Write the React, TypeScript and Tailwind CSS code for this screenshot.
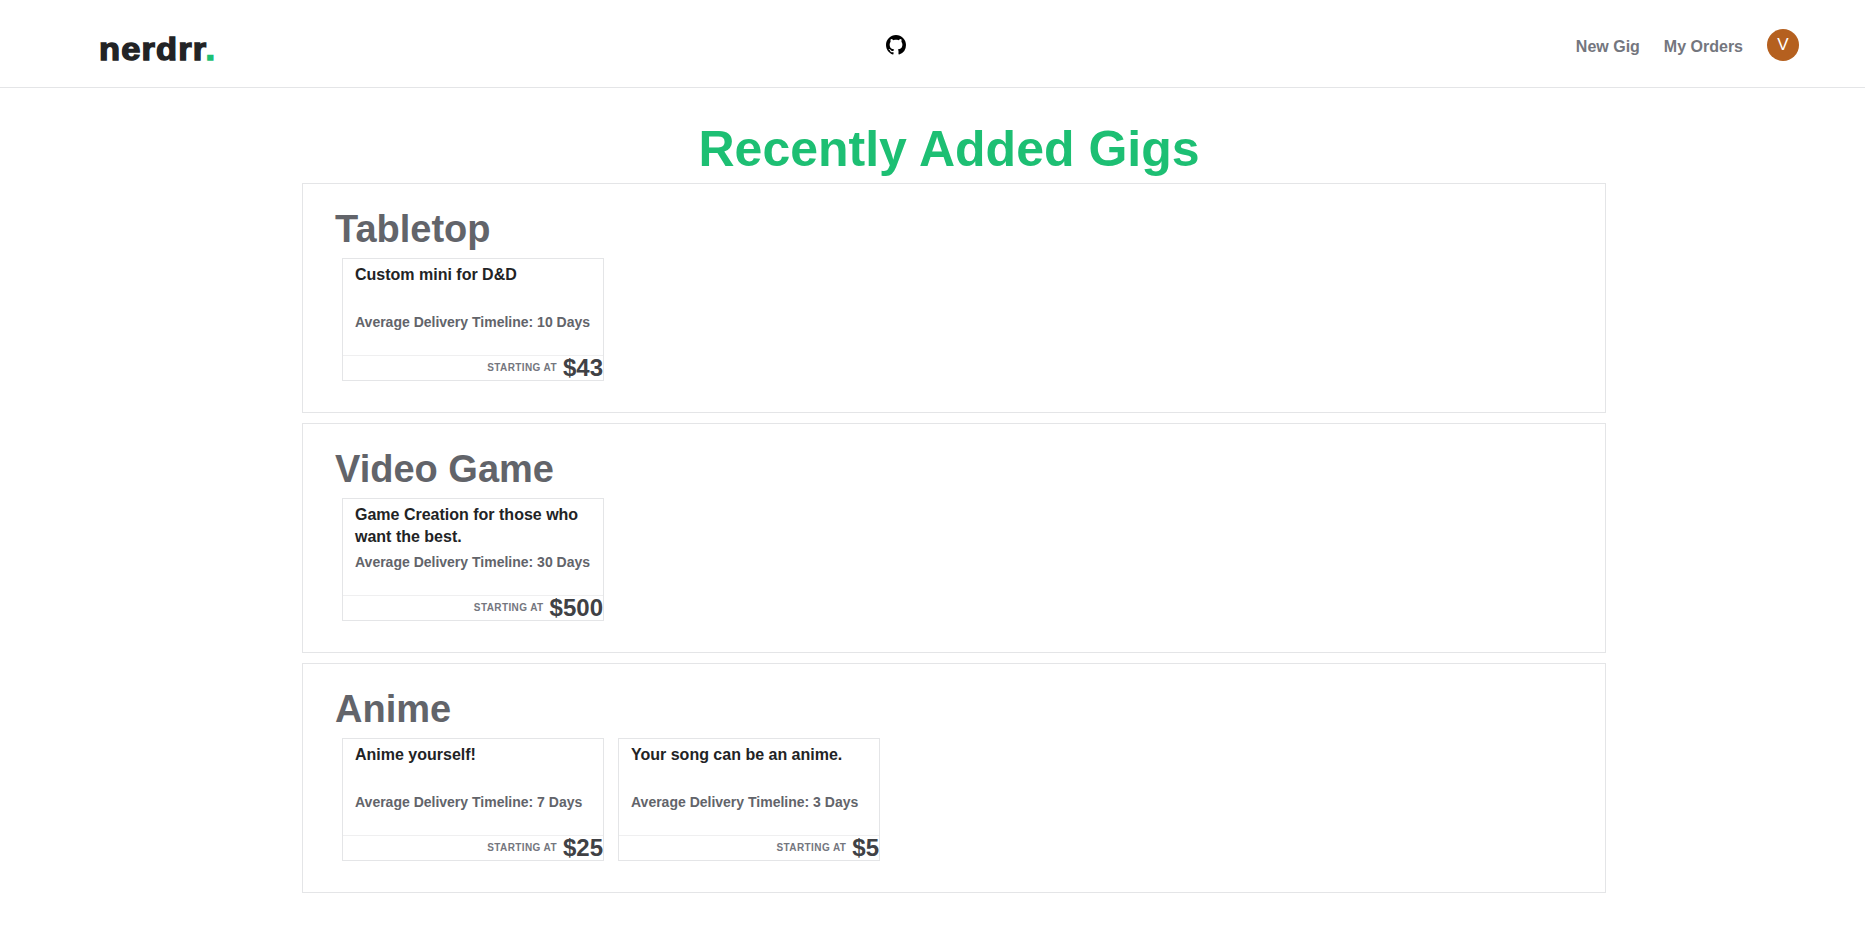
type Gig = { title: string; days: number; price: number };
type Category = { name: string; gigs: Gig[] };

const categories: Category[] = [
  { name: "Tabletop", gigs: [{ title: "Custom mini for D&D", days: 10, price: 43 }] },
  {
    name: "Video Game",
    gigs: [{ title: "Game Creation for those who want the best.", days: 30, price: 500 }],
  },
  {
    name: "Anime",
    gigs: [
      { title: "Anime yourself!", days: 7, price: 25 },
      { title: "Your song can be an anime.", days: 3, price: 5 },
    ],
  },
];

function GithubMark() {
  return (
    <svg viewBox="0 0 16 16" className="h-5 w-5" fill="#000">
      <path
        fillRule="evenodd"
        d="M8 0C3.58 0 0 3.58 0 8c0 3.54 2.29 6.53 5.47 7.59.4.07.55-.17.55-.38 0-.19-.01-.82-.01-1.49-2.01.37-2.53-.49-2.69-.94-.09-.23-.48-.94-.82-1.13-.28-.15-.68-.52-.01-.53.63-.01 1.08.58 1.23.82.72 1.21 1.87.87 2.33.66.07-.52.28-.87.51-1.07-1.78-.2-3.64-.89-3.64-3.95 0-.87.31-1.59.82-2.15-.08-.2-.36-1.02.08-2.12 0 0 .67-.21 2.2.82.64-.18 1.32-.27 2-.27.68 0 1.36.09 2 .27 1.53-1.04 2.2-.82 2.2-.82.44 1.1.16 1.92.08 2.12.51.56.82 1.27.82 2.15 0 3.07-1.87 3.75-3.65 3.95.29.25.54.73.54 1.48 0 1.07-.01 1.93-.01 2.2 0 .21.15.46.55.38A8.013 8.013 0 0016 8c0-4.42-3.58-8-8-8z"
      />
    </svg>
  );
}

function Header() {
  return (
    <header className="flex h-22 items-start border-b border-[#e4e5e7] pl-[99px] pr-[66px]">
      <div className="w-[787px] pt-[29px]">
        <span className="block w-32 origin-left scale-x-[1.13] text-[30.5px] leading-10 font-bold tracking-[1px] text-[#222325] [-webkit-text-stroke:1.3px_#222325]">
          nerdrr
          <span className="text-[#1dbf73] [-webkit-text-stroke:1.3px_#1dbf73]">.</span>
        </span>
      </div>
      <a href="#github" className="pt-[35px]">
        <GithubMark />
      </a>
      <nav className="ml-auto flex items-start gap-6 text-base leading-6 font-bold text-[#74767e]">
        <a href="#new" className="pt-[35px]">New Gig</a>
        <a href="#orders" className="pt-[35px]">My Orders</a>
        <span className="mt-[29px] h-8 w-8 rounded-full bg-[#b5601f] text-center text-[17px] leading-[31px] font-normal text-white">
          V
        </span>
      </nav>
    </header>
  );
}

function GigCard({ gig }: { gig: Gig }) {
  return (
    <article className="flex h-[123px] w-[262px] flex-col border border-[#e4e5e7]">
      <div className="h-[52px] pt-[5px] pl-3 text-base leading-[22px] text-[#222325]">
        <h3 className="w-[240px] font-bold">{gig.title}</h3>
      </div>
      <p className="h-11 pl-3 text-sm leading-[22px] font-bold whitespace-nowrap text-[#62646a]">
        Average Delivery Timeline: {gig.days} Days
      </p>
      <div className="flex h-[25px] items-center justify-end border-t border-[#efeff0]">
        <span className="mr-1.5 text-[10px] leading-6 font-bold tracking-[0.4px] text-[#74767e]">STARTING AT</span>
        <span className="text-2xl leading-6 font-bold text-[#404145]">${gig.price}</span>
      </div>
    </article>
  );
}

export default function App() {
  return (
    <div className="min-h-[952px] bg-white font-['Liberation_Sans',Arial,sans-serif]">
      <Header />
      <main className="ml-[302px] w-[1304px]">
        <h1 className="h-[95px] pt-[31px] pr-[10px] text-center text-[50px] leading-[60px] font-bold text-[#1dbf73]">
          Recently Added Gigs
        </h1>
        <div className="flex flex-col gap-2.5">
          {categories.map((c) => (
            <section key={c.name} className="h-[230px] border border-[#e4e5e7] pt-[23px] pl-8">
              <h2 className="h-[51px] text-[38px] leading-[44px] font-bold text-[#62646a]">{c.name}</h2>
              <div className="flex gap-3.5 pl-[7px]">
                {c.gigs.map((g) => (
                  <GigCard key={g.title} gig={g} />
                ))}
              </div>
            </section>
          ))}
        </div>
      </main>
    </div>
  );
}
